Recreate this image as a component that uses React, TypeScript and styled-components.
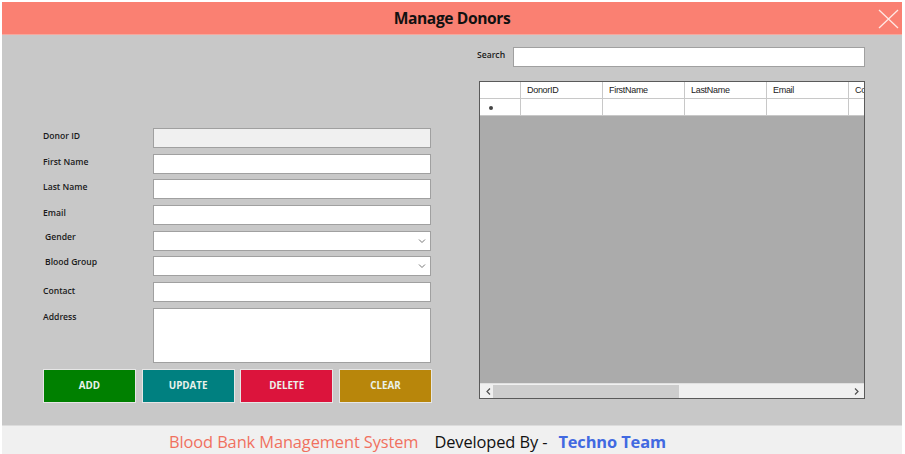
import React from "react";
import styled, { createGlobalStyle } from "styled-components";

const Global = createGlobalStyle`
  html, body { margin: 0; padding: 0; background: #ffffff; }
  body { font-family: "Open Sans", "Noto Sans", sans-serif; }
  * { box-sizing: border-box; }
`;

const Window = styled.div`
  width: 905px;
  height: 454px;
  padding: 2px 3px 0 2px;
  display: flex;
  flex-direction: column;
  background: #ffffff;
  overflow: hidden;
`;

const TitleBar = styled.header`
  height: 33px;
  flex: none;
  background: #fa8072;
  display: flex;
  align-items: center;
  justify-content: center;
  position: relative;
  border-bottom: 1px solid #f4a89e;
`;

const Title = styled.h1`
  margin: 0;
  font-family: "Open Sans", sans-serif;
  font-weight: 700;
  font-size: 15.6px;
  letter-spacing: -0.4px;
  color: #111;
`;

const CloseButton = styled.button`
  position: absolute;
  right: 3px;
  top: 6px;
  width: 22px;
  height: 22px;
  padding: 0;
  border: none;
  background: transparent;
  display: flex;
  align-items: center;
  justify-content: center;
`;

const Body = styled.main`
  height: 390px;
  flex: none;
  background: #c8c8c8;
  display: grid;
  grid-template-columns: 468px 1fr;
`;

const FormPane = styled.section`
  padding: 93px 0 0 41px;
  display: flex;
  flex-direction: column;
`;

const FormGrid = styled.div`
  display: grid;
  grid-template-columns: 110px 278px;
  row-gap: 5.7px;
`;

const Label = styled.label<{ $top?: number; $left?: number }>`
  font-family: "Open Sans", sans-serif;
  font-size: 8.6px;
  font-weight: 600;
  line-height: 12px;
  color: #1a1a1a;
  padding-top: ${(p) => p.$top ?? 2}px;
  padding-left: ${(p) => p.$left ?? 0}px;
`;

const TextBox = styled.div<{ $h?: number; $disabled?: boolean }>`
  height: ${(p) => p.$h ?? 20}px;
  background: ${(p) => (p.$disabled ? "#f0f0f0" : "#ffffff")};
  border: 1px solid #a0a0a0;
`;

const Combo = styled.div`
  height: 20px;
  background: #ffffff;
  border: 1px solid #a0a0a0;
  display: flex;
  align-items: center;
  justify-content: flex-end;
  padding-right: 4px;
`;

const ButtonRow = styled.div`
  margin-top: 6px;
  display: grid;
  grid-template-columns: repeat(4, 93px);
  width: 389px;
  justify-content: space-between;
`;

const ActionButton = styled.button<{ $bg: string }>`
  height: 34px;
  background: ${(p) => p.$bg};
  border: 1px solid #e6e6e6;
  color: #eaf2ea;
  font-family: "Open Sans", sans-serif;
  font-weight: 700;
  font-size: 9.8px;
  padding: 0;
`;

const GridPane = styled.section`
  padding: 12px 0 0 7px;
  display: flex;
  flex-direction: column;
`;

const SearchRow = styled.div`
  display: flex;
  align-items: center;
  height: 20px;
`;

const SearchLabel = styled.span`
  width: 36px;
  font-family: "Open Sans", sans-serif;
  font-size: 8.6px;
  font-weight: 600;
  color: #1a1a1a;
  margin-top: -4px;
`;

const SearchBox = styled.div`
  width: 352px;
  height: 20px;
  background: #ffffff;
  border: 1px solid #a0a0a0;
`;

const DataGrid = styled.div`
  margin: 14px 0 0 2px;
  width: 386px;
  height: 318px;
  border: 1px solid #5a5a5a;
  background: #ababab;
  display: flex;
  flex-direction: column;
  overflow: hidden;
`;

const GridRow = styled.div`
  display: grid;
  grid-template-columns: 41px 82px 82px 82px 82px 82px;
  height: 17px;
  background: #ffffff;
  flex: none;
  width: 384px;
  overflow: hidden;
`;

const Cell = styled.div`
  border-right: 1px solid #c8c8c8;
  border-bottom: 1px solid #c8c8c8;
  font-family: "Liberation Sans", "Open Sans", sans-serif;
  font-size: 9px;
  letter-spacing: -0.3px;
  color: #222;
  padding-left: 6px;
  display: flex;
  align-items: center;
  white-space: nowrap;
  overflow: hidden;
`;

const RowMarker = styled.span`
  width: 4px;
  height: 4px;
  border-radius: 50%;
  background: #444;
  margin-left: 3px;
  margin-top: 2px;
`;

const Spacer = styled.div`
  flex: 1;
`;

const HScroll = styled.div`
  height: 15px;
  flex: none;
  background: #f0f0f0;
  border-top: 1px solid #e0e0e0;
  display: flex;
  align-items: center;
  padding: 0 3px 0 4px;
`;

const ArrowBox = styled.span`
  width: 9px;
  display: flex;
  align-items: center;
  justify-content: center;
`;

const Track = styled.div`
  flex: 1;
  height: 13px;
  display: flex;
`;

const Thumb = styled.div`
  width: 186px;
  height: 13px;
  background: #cdcdcd;
`;

const Footer = styled.footer`
  flex: 1;
  background: #f0f0f0;
  border-top: 1px solid #dcdcdc;
  display: flex;
  align-items: center;
  padding: 2px 0 0 167px;
  font-family: "Open Sans", sans-serif;
  font-size: 16.4px;
  letter-spacing: -0.1px;
`;

const FooterText = styled.span<{ $color: string; $bold?: boolean; $gap?: number }>`
  color: ${(p) => p.$color};
  font-weight: ${(p) => (p.$bold ? 700 : 400)};
  margin-right: ${(p) => p.$gap ?? 0}px;
  white-space: pre;
`;

const Chevron = () => (
  <svg width="8" height="6" viewBox="0 0 8 6">
    <path d="M1 1.5 L4 4.5 L7 1.5" stroke="#777" strokeWidth="1" fill="none" />
  </svg>
);

const ScrollArrow = ({ dir }: { dir: "left" | "right" }) => (
  <ArrowBox>
    <svg width="5" height="7" viewBox="0 0 5 7">
      <path
        d={dir === "left" ? "M4 0.5 L1 3.5 L4 6.5" : "M1 0.5 L4 3.5 L1 6.5"}
        stroke="#505050"
        strokeWidth="1.2"
        fill="none"
      />
    </svg>
  </ArrowBox>
);

const fields: { label: string; kind: "text" | "combo" | "disabled" | "area"; top?: number; left?: number }[] = [
  { label: "Donor ID", kind: "disabled" },
  { label: "First Name", kind: "text" },
  { label: "Last Name", kind: "text" },
  { label: "Email", kind: "text" },
  { label: "Gender", kind: "combo", top: 0, left: 2 },
  { label: "Blood Group", kind: "combo", top: 0, left: 2 },
  { label: "Contact", kind: "text", top: 3 },
  { label: "Address", kind: "area", top: 3 },
];

const buttons = [
  { text: "ADD", bg: "#008000" },
  { text: "UPDATE", bg: "#008080" },
  { text: "DELETE", bg: "#dc143c" },
  { text: "CLEAR", bg: "#b8860b" },
];

const columns = ["DonorID", "FirstName", "LastName", "Email", "Contact"];

export default function App() {
  return (
    <>
      <Global />
      <Window>
        <TitleBar>
          <Title>Manage Donors</Title>
          <CloseButton aria-label="Close">
            <svg width="21" height="20" viewBox="0 0 21 20">
              <path d="M1 1 L20 19 M20 1 L1 19" stroke="#ffe8e4" strokeWidth="1.3" fill="none" />
            </svg>
          </CloseButton>
        </TitleBar>
        <Body>
          <FormPane>
            <FormGrid>
              {fields.map((f) => (
                <React.Fragment key={f.label}>
                  <Label $top={f.top} $left={f.left}>
                    {f.label}
                  </Label>
                  {f.kind === "combo" ? (
                    <Combo>
                      <Chevron />
                    </Combo>
                  ) : (
                    <TextBox $disabled={f.kind === "disabled"} $h={f.kind === "area" ? 55 : 20} />
                  )}
                </React.Fragment>
              ))}
            </FormGrid>
            <ButtonRow>
              {buttons.map((b) => (
                <ActionButton key={b.text} $bg={b.bg}>
                  {b.text}
                </ActionButton>
              ))}
            </ButtonRow>
          </FormPane>
          <GridPane>
            <SearchRow>
              <SearchLabel>Search</SearchLabel>
              <SearchBox />
            </SearchRow>
            <DataGrid>
              <GridRow>
                <Cell />
                {columns.map((c) => (
                  <Cell key={c}>{c}</Cell>
                ))}
              </GridRow>
              <GridRow>
                <Cell>
                  <RowMarker />
                </Cell>
                {columns.map((c) => (
                  <Cell key={c} />
                ))}
              </GridRow>
              <Spacer />
              <HScroll>
                <ScrollArrow dir="left" />
                <Track>
                  <Thumb />
                </Track>
                <ScrollArrow dir="right" />
              </HScroll>
            </DataGrid>
          </GridPane>
        </Body>
        <Footer>
          <FooterText $color="#f0705f" $gap={16}>Blood Bank Management System</FooterText>
          <FooterText $color="#111" $gap={11}>Developed By -</FooterText>
          <FooterText $color="#4169e1" $bold>Techno Team</FooterText>
        </Footer>
      </Window>
    </>
  );
}
